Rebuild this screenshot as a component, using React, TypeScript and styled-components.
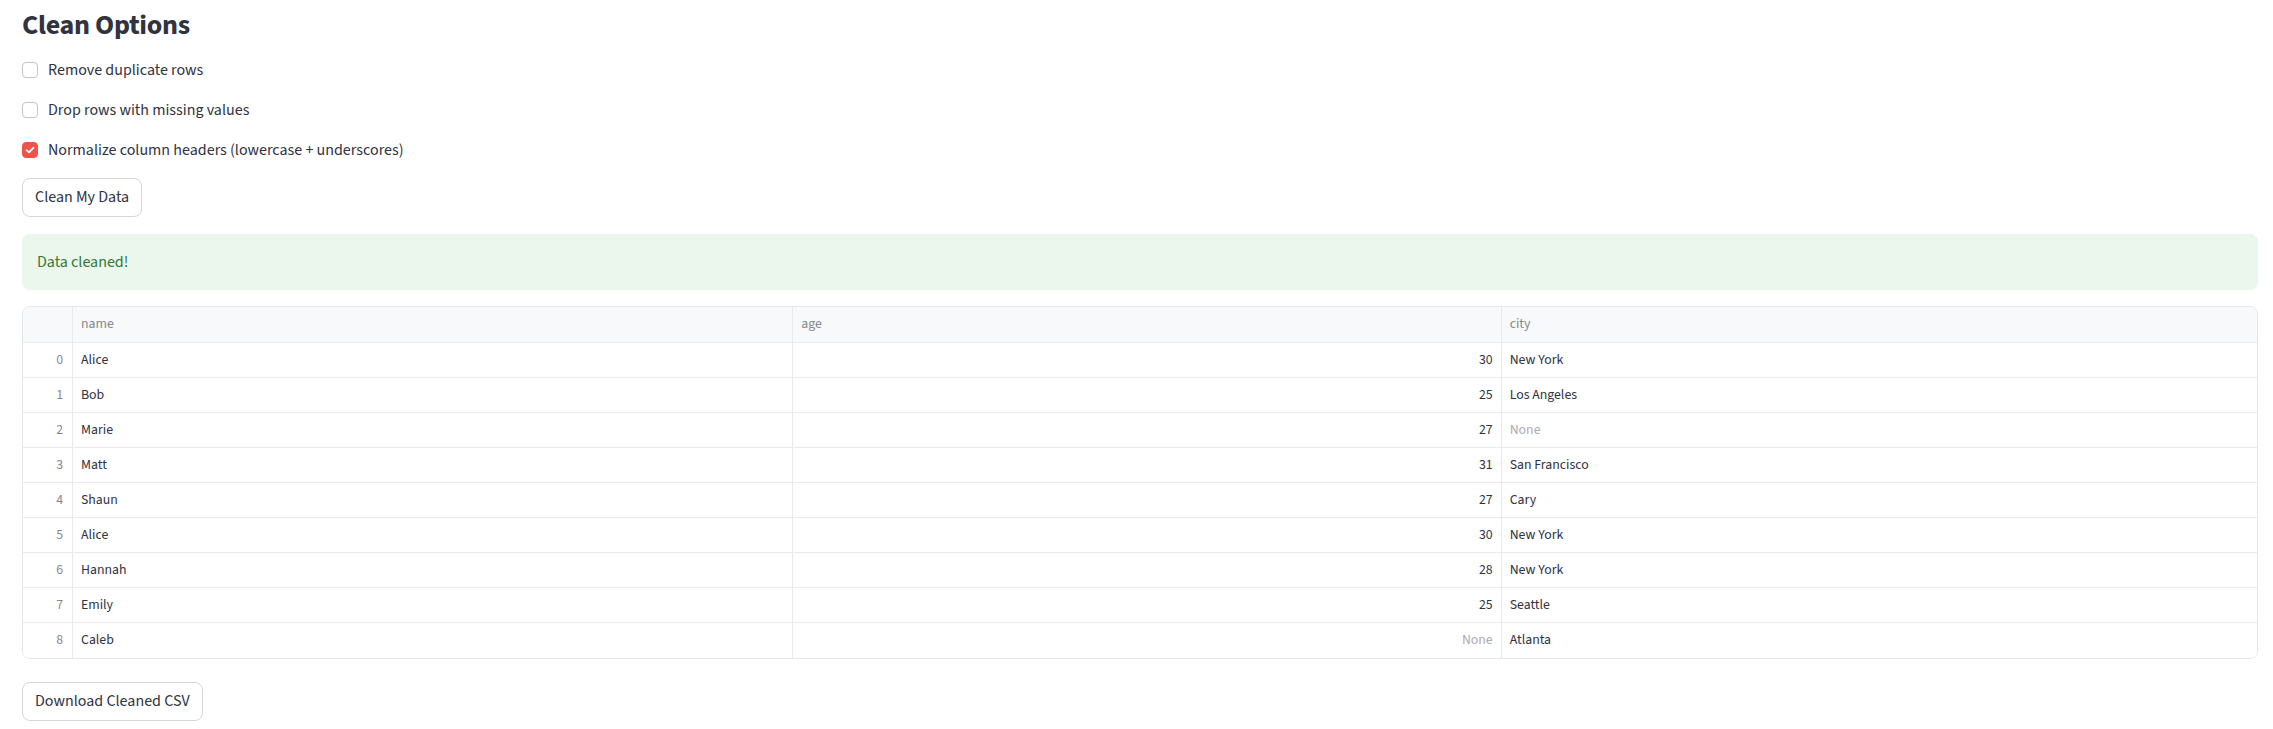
import React from "react";
import styled, { createGlobalStyle } from "styled-components";

const GlobalStyle = createGlobalStyle`
  html, body {
    margin: 0;
    padding: 0;
    background: #ffffff;
  }
  body {
    font-family: "Source Sans Pro", "Source Sans 3", Lato, "Liberation Sans", sans-serif;
    color: #31333f;
    -webkit-font-smoothing: antialiased;
  }
  * { box-sizing: border-box; }
`;

const Page = styled.main`
  display: flex;
  flex-direction: column;
  padding: 9px 15px 0 22px;
  width: 2273px;
`;

const Title = styled.h3`
  margin: 0;
  font-size: 28px;
  line-height: 1.2;
  font-weight: 700;
  color: #31333f;
  letter-spacing: -0.3px;
`;

const OptionList = styled.div`
  display: flex;
  flex-direction: column;
  gap: 16px;
  margin-top: 15px;
`;

const OptionRow = styled.label`
  display: flex;
  align-items: center;
  gap: 10px;
  height: 24px;
  font-size: 16px;
  line-height: 24px;
  color: #31333f;
  cursor: pointer;
`;

const Box = styled.span<{ $checked: boolean }>`
  display: inline-flex;
  align-items: center;
  justify-content: center;
  width: 16px;
  height: 16px;
  border-radius: 4px;
  border: 1px solid ${(p) => (p.$checked ? "#f0524c" : "#c4c5c9")};
  background: ${(p) => (p.$checked ? "#f0524c" : "#ffffff")};
  flex-shrink: 0;
`;

const Button = styled.button<{ $top: number }>`
  align-self: flex-start;
  margin-top: ${(p) => p.$top}px;
  height: 39px;
  padding: 0 12px;
  border: 1px solid #d5d6d9;
  border-radius: 8px;
  background: #ffffff;
  font-family: inherit;
  font-size: 16px;
  color: #31333f;
  cursor: pointer;
`;

const Alert = styled.div`
  margin-top: 17px;
  height: 56px;
  display: flex;
  align-items: center;
  padding: 0 15px;
  border-radius: 8px;
  background: #ebf6ec;
  color: #2f7a35;
  font-size: 16px;
`;

const Table = styled.div`
  margin-top: 16px;
  display: grid;
  grid-template-columns: 50px 721fr 709fr 756fr;
  border: 1px solid #e6e7ea;
  border-radius: 8px;
  overflow: hidden;
`;

const Cell = styled.div<{
  $header?: boolean;
  $right?: boolean;
  $muted?: boolean;
  $lastCol?: boolean;
  $lastRow?: boolean;
}>`
  height: ${(p) => (p.$header ? 36 : 35)}px;
  display: flex;
  align-items: center;
  justify-content: ${(p) => (p.$right ? "flex-end" : "flex-start")};
  padding: 0 8px 0 8px;
  font-size: 13.8px;
  white-space: nowrap;
  overflow: hidden;
  background: ${(p) => (p.$header ? "#f8f9fb" : "#ffffff")};
  color: ${(p) => (p.$header ? "#868890" : p.$muted ? "#abacb1" : "#31333f")};
  border-right: ${(p) => (p.$lastCol ? "none" : "1px solid #e9eaec")};
  border-bottom: ${(p) => (p.$lastRow ? "none" : "1px solid #e9eaec")};
`;

const IndexCell = styled(Cell)`
  justify-content: flex-end;
  padding-right: 9px;
  color: #868890;
`;

type Row = { name: string; age: number | null; city: string | null };

const rows: Row[] = [
  { name: "Alice", age: 30, city: "New York" },
  { name: "Bob", age: 25, city: "Los Angeles" },
  { name: "Marie", age: 27, city: null },
  { name: "Matt", age: 31, city: "San Francisco" },
  { name: "Shaun", age: 27, city: "Cary" },
  { name: "Alice", age: 30, city: "New York" },
  { name: "Hannah", age: 28, city: "New York" },
  { name: "Emily", age: 25, city: "Seattle" },
  { name: "Caleb", age: null, city: "Atlanta" },
];

const options = [
  { label: "Remove duplicate rows", checked: false },
  { label: "Drop rows with missing values", checked: false },
  { label: "Normalize column headers (lowercase + underscores)", checked: true },
];

const Check = () => (
  <svg width="10" height="10" viewBox="0 0 10 10" fill="none">
    <polyline
      points="1.6,5.2 4,7.4 8.4,2.8"
      stroke="#ffffff"
      strokeWidth="1.8"
      strokeLinecap="round"
      strokeLinejoin="round"
    />
  </svg>
);

export default function App() {
  return (
    <>
      <GlobalStyle />
      <Page>
        <Title>Clean Options</Title>
        <OptionList>
          {options.map((o) => (
            <OptionRow key={o.label}>
              <Box $checked={o.checked}>{o.checked && <Check />}</Box>
              {o.label}
            </OptionRow>
          ))}
        </OptionList>
        <Button $top={16}>Clean My Data</Button>
        <Alert>Data cleaned!</Alert>
        <Table>
          <IndexCell $header />
          <Cell $header>name</Cell>
          <Cell $header>age</Cell>
          <Cell $header $lastCol>
            city
          </Cell>
          {rows.map((r, i) => {
            const last = i === rows.length - 1;
            return (
              <React.Fragment key={i}>
                <IndexCell $lastRow={last}>{i}</IndexCell>
                <Cell $lastRow={last}>{r.name}</Cell>
                <Cell $lastRow={last} $right $muted={r.age === null}>
                  {r.age === null ? "None" : r.age}
                </Cell>
                <Cell $lastRow={last} $lastCol $muted={r.city === null}>
                  {r.city === null ? "None" : r.city}
                </Cell>
              </React.Fragment>
            );
          })}
        </Table>
        <Button $top={23}>Download Cleaned CSV</Button>
      </Page>
    </>
  );
}
